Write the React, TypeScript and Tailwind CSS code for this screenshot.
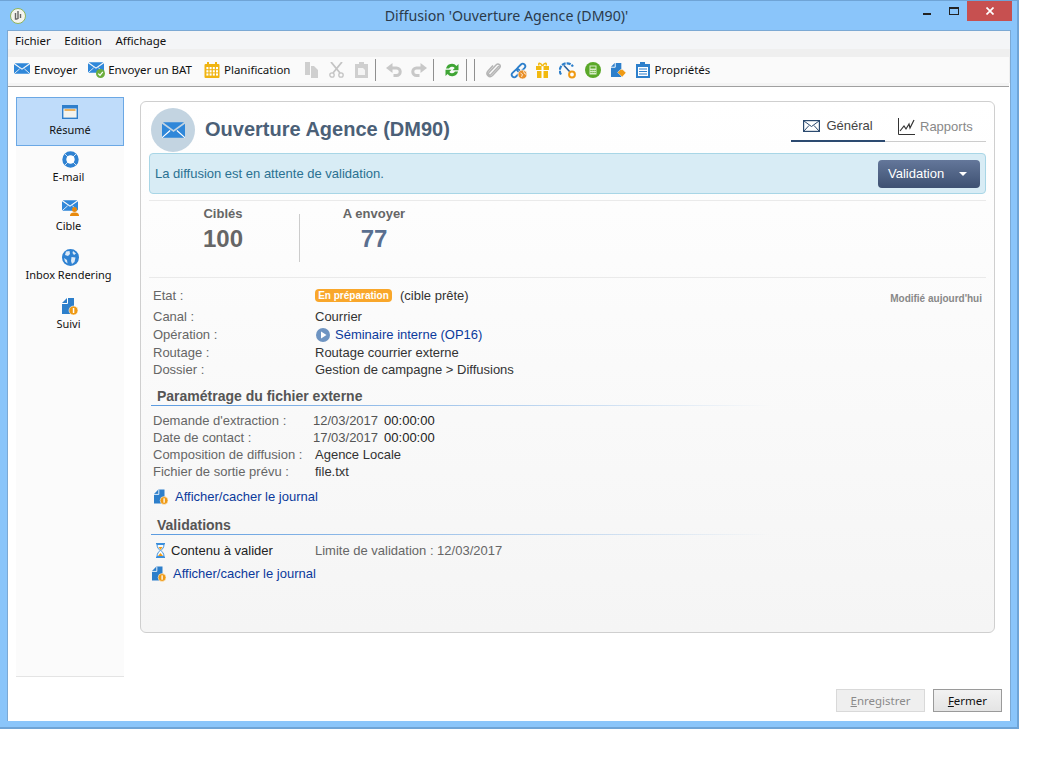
import React from 'react';

const Envelope: React.FC<{ className?: string; color?: string }> = ({ className, color = '#2f87d9' }) => (
  <svg viewBox="0 0 24 16" className={className}>
    <path d="M0 1.500 12 10 24 1.500V16H0Z" fill={color} />
    <path d="M1 0h22L12 8Z" fill={color} />
    <path d="M0 16 8.500 8.500M24 16 15.500 8.500" stroke="#fff" strokeWidth="1.200" fill="none" />
  </svg>
);

const SuiviIcon: React.FC<{ className?: string }> = ({ className }) => (
  <svg viewBox="0 0 16 17" className={className}>
    <path d="M5 0h7v16H0V5Z" fill="#2d7fcb" />
    <path d="M0 5.500h5.500V0" stroke="#fff" strokeWidth="1" fill="none" />
    <circle cx="11.500" cy="12.500" r="4.500" fill="#ef9a14" stroke="#fff" strokeWidth="0.600" />
    <rect x="10.800" y="10" width="1.500" height="5" fill="#fff" />
  </svg>
);

const Calendar = () => (
  <svg viewBox="0 0 16 16" className="w-4 h-4">
    <rect x="0.500" y="2" width="15" height="14" rx="1" fill="#f0b411" />
    <rect x="3" y="0" width="2" height="3" fill="#f0b411" />
    <rect x="11" y="0" width="2" height="3" fill="#f0b411" />
    {[5, 8.2, 11.4].map((y) =>
      [2.4, 5.6, 8.8, 12].map((x) => <rect key={`${x}-${y}`} x={x} y={y} width="2" height="2.200" fill="#fff" />)
    )}
  </svg>
);

const UndoArrow: React.FC<{ className?: string }> = ({ className }) => (
  <svg viewBox="0 0 16 14" className={className}>
    <path d="M6.500 0 0 5l6.500 5Z" fill="#c8c8c8" />
    <path d="M5 5h5.500a3.700 3.700 0 0 1 0 7.500H7.500" stroke="#c8c8c8" strokeWidth="3" fill="none" />
  </svg>
);

const Separator = () => <div className="w-px h-[22px] bg-[#8f8f8f]" />;

const ToolText: React.FC<{ children: React.ReactNode }> = ({ children }) => (
  <span className="ml-1 text-[11.5px] text-[#111]">{children}</span>
);

const Toolbar = () => (
  <div className="h-[26px] mr-px bg-[#fafafa] flex items-center pl-[6px]">
    <Envelope className="w-4 h-[11px] -mt-1" />
    <ToolText>Envoyer</ToolText>
    <div className="relative ml-[11px] w-4 h-4">
      <Envelope className="w-4 h-[11px]" />
      <svg viewBox="0 0 9 9" className="absolute right-[-1px] bottom-0 w-[9px] h-[9px]">
        <circle cx="4.500" cy="4.500" r="4.500" fill="#6cae3c" />
        <path d="M2.200 4.600 4 6.300 6.800 2.800" stroke="#fff" strokeWidth="1.200" fill="none" />
      </svg>
    </div>
    <ToolText>Envoyer un BAT</ToolText>
    <div className="ml-3"><Calendar /></div>
    <ToolText>Planification</ToolText>
    <svg viewBox="0 0 15 16" className="ml-[14px] w-[15px] h-4">
      <path d="M1 0h5v13H1ZM7 4h3l4 4v8H7Z" fill="#cfcfcf" />
    </svg>
    <svg viewBox="0 0 15 16" className="ml-[10px] w-[15px] h-4">
      <path d="M2 0 11 11M13 0 4 11" stroke="#c4c4c4" strokeWidth="1.800" fill="none" />
      <circle cx="3" cy="13" r="2.200" stroke="#c4c4c4" strokeWidth="1.300" fill="none" />
      <circle cx="12" cy="13" r="2.200" stroke="#c4c4c4" strokeWidth="1.300" fill="none" />
    </svg>
    <svg viewBox="0 0 14 16" className="ml-[11px] w-[14px] h-4">
      <path d="M0 2h4V0h5v2h4v14H0Z" fill="#cfcfcf" />
      <path d="M3 6h5l2 2v5H3Z" fill="#f4f4f4" />
    </svg>
    <div className="ml-[6px]"><Separator /></div>
    <UndoArrow className="ml-[10px] w-4 h-[14px]" />
    <UndoArrow className="ml-[9px] w-4 h-[14px] -scale-x-100" />
    <div className="ml-[6px]"><Separator /></div>
    <svg viewBox="0 0 16 16" className="ml-[10px] w-4 h-4">
      <path d="M2 6.500A6 6 0 0 1 12.500 4L14.500 2v6.200h-6l2.200-2.200A3.400 3.400 0 0 0 5 6.500ZM14 9.500A6 6 0 0 1 3.500 12L1.500 14V7.800h6l-2.200 2.200a3.400 3.400 0 0 0 5.700-.5Z" fill="#3fa535" />
    </svg>
    <div className="ml-[6px]"><Separator /></div>
    <div className="ml-[7px]"><Separator /></div>
    <svg viewBox="0 0 16 16" className="ml-[10px] w-4 h-4">
      <path d="M14 4 6 12.500c-1.500 1.500-3.500-.5-2-2l7-7.500c2.500-2.500 5.500.5 3.500 3L7.500 13.500c-3 3-7.500-1-4.500-4.500l5-5.500" stroke="#b5b5b5" strokeWidth="1.500" fill="none" />
    </svg>
    <svg viewBox="0 0 17 17" className="ml-[9px] w-[17px] h-[17px]">
      <g transform="rotate(-45 8.500 8.500)" stroke="#2d7fcb" strokeWidth="1.800" fill="none">
        <rect x="0" y="6" width="9.500" height="5" rx="2.500" />
        <rect x="7.500" y="6" width="9.500" height="5" rx="2.500" />
      </g>
      <circle cx="12.500" cy="12.500" r="4.500" fill="#e9902a" stroke="#fff" strokeWidth="0.700" />
      <path d="M10.500 11 12.500 12.500l-1 2.500M13.500 9l1 2.500 2 1" stroke="#fff" strokeWidth="0.800" fill="none" />
    </svg>
    <svg viewBox="0 0 15 16" className="ml-[8px] w-[15px] h-4">
      <path d="M1 4h13v4H1ZM2 9h11v7H2Z" fill="#f2b90f" />
      <path d="M6.500 4h2v12h-2Z" fill="#fff" />
      <path d="M7.500 4C5 0 3 1 4 3.500M7.500 4C10 0 12 1 11 3.500" stroke="#f2b90f" strokeWidth="1.500" fill="none" />
    </svg>
    <svg viewBox="0 0 17 17" className="ml-[9px] w-[17px] h-[17px]">
      <path d="M2 12.500A7 7 0 0 1 14 4.500" stroke="#2d7fcb" strokeWidth="2.200" strokeDasharray="4 1" fill="none" />
      <path d="M5 3.500l6 6.500" stroke="#2a5f99" strokeWidth="1.600" />
      <circle cx="13" cy="12.500" r="2.900" stroke="#ef9a14" strokeWidth="2" fill="#fff" />
    </svg>
    <svg viewBox="0 0 16 16" className="ml-[9px] w-4 h-4">
      <circle cx="8" cy="8" r="8" fill="#5aa829" />
      <rect x="4.500" y="3.500" width="7" height="9" fill="#d8ecc8" />
      <rect x="5.500" y="4.500" width="5" height="2" fill="#5aa829" />
      <path d="M5.500 8h1.200v1H5.500ZM7.500 8h1.200v1H7.500ZM9.500 8h1.200v1H9.500ZM5.500 10h1.200v1H5.500ZM7.500 10h1.200v1H7.500ZM9.500 10h1.200v1H9.500Z" fill="#5aa829" />
    </svg>
    <svg viewBox="0 0 16 16" className="ml-[10px] w-[15px] h-[15px]">
      <path d="M4 0h7v15H0V4Z" fill="#2d7fcb" />
      <path d="M0 4.500h4.500V0" stroke="#fff" fill="none" />
      <path d="M7 10l3-3h2.500l3.500 3.500L12 15Z" fill="#ef9a14" stroke="#fff" strokeWidth="0.500" />
    </svg>
    <svg viewBox="0 0 14 16" className="ml-[10px] w-[14px] h-4">
      <path d="M0 2h4V0h5v2h5v14H0Z" fill="#2d7fcb" />
      <path d="M2 5h10v9H2Z" fill="#fff" />
      <path d="M3 7h8M3 9.500h8M3 12h8" stroke="#2d7fcb" strokeWidth="1.200" />
    </svg>
    <ToolText>Propriétés</ToolText>
  </div>
);

const SideItem: React.FC<{ label: string; icon: React.ReactNode; active?: boolean }> = ({ label, icon, active }) => (
  <div className={`h-[49px] flex flex-col items-center text-[11px] text-[#111] ${active ? 'pt-[5px] bg-[#bfdcfa] border border-[#6ba8e5]' : 'pt-[4px]'}`}>
    <div className="h-[18px] flex items-center justify-center">{icon}</div>
    <span className={`mt-px leading-[15px] ${active ? '' : '-ml-[3px]'}`}>{label}</span>
  </div>
);

const Sidebar = () => (
  <div className="ml-2 mt-[10px] w-[108px] h-[580px] bg-[#fbfbfb] border-b border-[#e4e4e4]">
    <SideItem
      active
      label="Résumé"
      icon={
        <svg viewBox="0 0 16 14" className="w-4 h-[14px]">
          <rect x="0.700" y="0.700" width="14.600" height="12.600" fill="#f3f3ee" stroke="#2f7fcc" strokeWidth="1.400" />
          <rect x="1" y="1" width="14" height="2.500" fill="#2f7fcc" />
          <rect x="2.500" y="4" width="11" height="2" fill="#ecb25e" />
        </svg>
      }
    />
    <SideItem
      label="E-mail"
      icon={
        <svg viewBox="0 0 17 17" className="w-[17px] h-[17px]">
          <circle cx="8.500" cy="8.500" r="6.200" fill="#fff" stroke="#2f82d2" strokeWidth="4" />
          <path d="M3 3l3 3M14 3l-3 3M3 14l3-3M14 14l-3-3" stroke="#fbfbfb" strokeWidth="0.800" />
        </svg>
      }
    />
    <SideItem
      label="Cible"
      icon={
        <div className="relative w-[17px] h-4">
          <Envelope className="w-4 h-[11px]" />
          <svg viewBox="0 0 9 9" className="absolute right-0 bottom-0 w-[9px] h-[9px]">
            <circle cx="4.500" cy="2.500" r="2.500" fill="#e8890c" />
            <path d="M0 9c0-3 2-3.500 4.500-3.500S9 6 9 9Z" fill="#e8890c" />
          </svg>
        </div>
      }
    />
    <SideItem
      label="Inbox Rendering"
      icon={
        <svg viewBox="0 0 17 17" className="w-[17px] h-[17px]">
          <circle cx="8.500" cy="8.500" r="8.500" fill="#2f82d2" />
          <path d="M4 2.500 7.500 2 8 5 6 7 3 6ZM9.500 8l4 .5-1 4.500-2.500 2-1-3ZM11 2l3 2.500-2 1.500-1.500-2ZM2 9l3 2 .5 3.500L3 12.500Z" fill="#dbe9f7" />
        </svg>
      }
    />
    <SideItem label="Suivi" icon={<SuiviIcon className="w-4 h-[17px]" />} />
  </div>
);

const Label: React.FC<{ children: React.ReactNode }> = ({ children }) => (
  <span className="text-[#666]">{children}</span>
);

const InfoRow: React.FC<{ label: string; children: React.ReactNode; h?: string }> = ({ label, children, h = 'h-[18px]' }) => (
  <div className={`${h} flex items-center`}>
    <div className="w-[162px] text-[#666]">{label}</div>
    <div className="flex items-center text-[#333]">{children}</div>
  </div>
);

const SectionHead: React.FC<{ title: string }> = ({ title }) => (
  <div className="-ml-[2px] w-[620px]">
    <div className="pl-[6px] font-bold text-[14px] leading-[15px] text-[#555]">{title}</div>
    <div className="mt-[1px] h-px bg-linear-to-r from-[#5b9be0] to-transparent" />
  </div>
);

const JournalLink: React.FC = () => (
  <div className="flex items-center text-[#0b3a9c]">
    <SuiviIcon className="w-[14px] h-4" />
    <span className="ml-[7px]">Afficher/cacher le journal</span>
  </div>
);

const Card = () => (
  <div className="mt-[14px] w-[855px] h-[532px] border border-[#cfcfcf] rounded-[6px] bg-linear-to-b from-white to-[#f5f5f5] px-2 flex flex-col font-['Liberation_Sans',Arial,sans-serif] text-[13px]">
    <div className="h-[51px] flex pt-[6px]">
      <div className="ml-[2px] w-[44px] h-[44px] rounded-full bg-[#c3d4e1] flex items-center justify-center">
        <Envelope className="w-[23px] h-4" />
      </div>
      <div className="ml-[10px] mt-[8px] text-[20px] leading-[26px] font-bold text-[#4b6077]">Ouverture Agence (DM90)</div>
      <div className="ml-auto mt-[6px] w-[195px] h-[28px] border-b border-[#ccc] flex">
        <div className="w-[94px] h-[28px] pb-[2px] border-b-2 border-[#2c4a70] flex items-center justify-center text-[#444]">
          <svg viewBox="0 0 17 12" className="w-[17px] h-3">
            <rect x="0.600" y="0.600" width="15.800" height="10.800" fill="none" stroke="#2b4a6f" strokeWidth="1.200" />
            <path d="M1 1 8.500 6.500 16 1M1 11 6 5.500M16 11 11 5.500" stroke="#2b4a6f" strokeWidth="1" fill="none" />
          </svg>
          <span className="ml-[6px]">Général</span>
        </div>
        <div className="ml-[13px] pb-[2px] flex items-center text-[#888]">
          <svg viewBox="0 0 17 17" className="w-[17px] h-[17px]">
            <path d="M.500 0v16.500H17" stroke="#333" fill="none" />
            <path d="M2 13 6 8l2 3 3-5 1 4 4-8" stroke="#333" strokeWidth="1.200" fill="none" />
          </svg>
          <span className="ml-[5px]">Rapports</span>
        </div>
      </div>
    </div>
    <div className="h-[41px] bg-[#d8ecf5] border border-[#a8d6e6] rounded-[4px] flex items-center pl-[5px] pr-[5px] text-[#2a7192]">
      La diffusion est en attente de validation.
      <div className="ml-auto w-[102px] h-[28px] rounded-[4px] bg-linear-to-b from-[#64779a] to-[#3e5172] flex items-center pl-[10px] text-white">
        Validation
        <div className="ml-[15px] w-0 h-0 border-x-[4px] border-x-transparent border-t-[4px] border-t-white" />
      </div>
    </div>
    <div className="mt-[6px] h-[78px] border-y border-[#eaeaea] flex">
      <div className="w-[148px] mr-[2px] flex flex-col items-center pt-[5px]">
        <div className="font-bold text-[#666] leading-[15px]">Ciblés</div>
        <div className="mt-[4px] text-[24px] leading-[28px] font-bold text-[#666]">100</div>
      </div>
      <div className="mt-[13px] h-[48px] w-px bg-[#ccc]" />
      <div className="w-[148px] flex flex-col items-center pt-[5px]">
        <div className="font-bold text-[#666] leading-[15px]">A envoyer</div>
        <div className="mt-[4px] text-[24px] leading-[28px] font-bold text-[#5a6f8f]">77</div>
      </div>
    </div>
    <div className="relative pl-[4px] pt-[8px]">
      <div className="absolute right-[4px] top-[13px] text-[10px] font-bold text-[#888]">Modifié aujourd'hui</div>
      <InfoRow label="Etat :" h="h-[21px] -mt-[1px]">
        <span className="h-[13px] w-[77px] rounded-[4px] bg-[#f9a72b] text-white font-bold text-[10px] leading-[13px] text-center">En préparation</span>
        <span className="ml-2">(cible prête)</span>
      </InfoRow>
      <InfoRow label="Canal :" h="h-[18px] mt-[2px]">Courrier</InfoRow>
      <InfoRow label="Opération :">
        <svg viewBox="0 0 14 14" className="ml-px w-[14px] h-[14px]">
          <circle cx="7" cy="7" r="7" fill="#6e94c2" />
          <path d="M5 3.500 10.500 7 5 10.500Z" fill="#fff" />
        </svg>
        <span className="ml-[5px] text-[#0b3a9c]">Séminaire interne (OP16)</span>
      </InfoRow>
      <InfoRow label="Routage :" h="h-[17px]">Routage courrier externe</InfoRow>
      <InfoRow label="Dossier :" h="h-[17px]">Gestion de campagne &gt; Diffusions</InfoRow>
      <div className="mt-[11px]"><SectionHead title="Paramétrage du fichier externe" /></div>
      <div className="mt-[6px] flex flex-col">
        {[
          ["Demande d'extraction :", '12/03/2017'],
          ['Date de contact :', '17/03/2017'],
        ].map(([label, date]) => (
          <div key={label} className="h-[17px] flex items-center">
            <div className="w-[160px]"><Label>{label}</Label></div>
            <span className="text-[#555]">{date}</span>
            <span className="ml-[6px] text-[#222]">00:00:00</span>
          </div>
        ))}
        <InfoRow label="Composition de diffusion :" h="h-[17px]">Agence Locale</InfoRow>
        <InfoRow label="Fichier de sortie prévu :" h="h-[17px]">file.txt</InfoRow>
      </div>
      <div className="mt-[7px] h-[20px] flex items-center pl-px"><JournalLink /></div>
      <div className="mt-[11px]"><SectionHead title="Validations" /></div>
      <div className="mt-[7px] h-[17px] flex items-center">
        <svg viewBox="0 0 11 15" className="ml-[2px] w-[11px] h-[15px]">
          <path d="M1 .700h9M1 14.300h9" stroke="#3b8fdc" strokeWidth="1.400" />
          <path d="M2 1.500h7C9 5 7 6 6 7.500 7 9 9 10 9 13.500H2C2 10 4 9 5 7.500 4 6 2 5 2 1.500Z" fill="#f7fafd" stroke="#3b8fdc" />
          <path d="M3.500 4h4L5.500 7ZM3 13l2.500-3L8 13Z" fill="#ef9a14" />
        </svg>
        <span className="ml-[5px] w-[144px] text-[#222]">Contenu à valider</span>
        <span className="text-[#666]">Limite de validation : 12/03/2017</span>
      </div>
      <div className="mt-[5px] h-[20px] flex items-center -ml-px"><JournalLink /></div>
    </div>
  </div>
);

const Footer = () => (
  <div className="mt-auto mb-[9px] mr-2 flex justify-end gap-2 text-[11.5px]">
    <button className="w-[89px] h-[23px] bg-[#efefef] border border-[#d9d9d9] text-[#8a8a8a]">
      <span className="underline">E</span>nregistrer
    </button>
    <button className="w-[69px] h-[23px] bg-linear-to-b from-[#f2f2f2] to-[#e4e4e4] border border-[#9a9a9a] text-[#111]">
      <span className="underline">F</span>ermer
    </button>
  </div>
);

export default function App() {
  return (
    <div className="w-[1051px] h-[759px] bg-white font-['Noto_Sans',sans-serif]">
      <div className="w-[1019px] h-[729px] bg-[#8ac5fa] border-t border-[#6fa4d6] border-r-2 border-r-[#6fa4d6] border-b-2 border-b-[#6fa4d6] flex flex-col">
        <div className="relative h-[29px] flex items-center justify-center shrink-0 text-[14.2px] text-[#2b3a4a]">
          <svg viewBox="0 0 16 16" className="absolute left-[10px] top-[7px] w-4 h-4">
            <circle cx="8" cy="8" r="7.500" fill="#f4f4ee" stroke="#8fb45a" />
            <path d="M8 3v8M5.500 5v6h2M10.500 6v4" stroke="#666" strokeWidth="1.400" fill="none" />
          </svg>
          <span className="-ml-[4px]">Diffusion 'Ouverture Agence (DM90)'</span>
          <div className="absolute right-[5px] top-0 flex items-start">
            <div className="mt-[12px] mr-[18px] w-2 h-[2px] bg-[#222]" />
            <div className="mt-[6px] mr-[8px] w-[10px] h-[8px] border border-[#222] border-t-2" />
            <div className="w-[45px] h-[20px] bg-[#c75050] flex items-center justify-center">
              <svg viewBox="0 0 8 8" className="w-2 h-2">
                <path d="M.500.500 7.500 7.500M7.500.500 .500 7.500" stroke="#fff" strokeWidth="1.700" />
              </svg>
            </div>
          </div>
        </div>
        <div className="ml-[7px] mr-[6px] mb-[6px] flex-1 bg-white border-x border-t border-[#7ca9d4] flex flex-col min-h-0">
          <div className="h-[18px] pt-px bg-[#f4f5f7] shrink-0 flex items-center pl-[7px] gap-[13.5px] text-[11.5px] text-[#111]">
            <span>Fichier</span>
            <span>Edition</span>
            <span>Affichage</span>
          </div>
          <div className="bg-[#efefef] pt-[8px] shrink-0">
            <Toolbar />
          </div>
          <div className="h-[4px] shrink-0 bg-[#f4f4f4] mr-px border-b border-[#a0a0a0]" />
          <div className="flex flex-1 min-h-0">
            <Sidebar />
            <div className="ml-4 flex-1 flex flex-col">
              <Card />
              <Footer />
            </div>
          </div>
        </div>
      </div>
    </div>
  );
}
